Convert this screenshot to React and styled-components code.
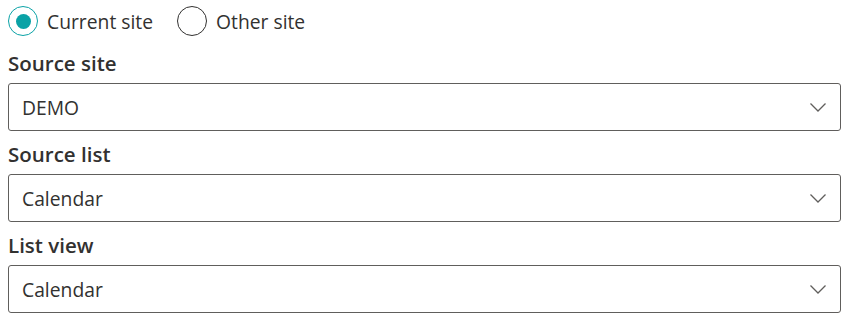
import React, { useState } from 'react';
import styled, { createGlobalStyle } from 'styled-components';

const GlobalStyle = createGlobalStyle`
    body{
        margin:0;
        background:#ffffff;
        font-family: "Segoe UI", "Open Sans", sans-serif;
        color:#323130;
    }
`

const Page = styled.div`
    padding: 0 5px 0 8px;
`

const RadioRow = styled.div`
    display:flex;
    align-items:center;
    gap:24px;
    height:40px;
    padding-top:2px;
    box-sizing:border-box;
`

const RadioOption = styled.label`
    display:flex;
    align-items:center;
    gap:9px;
    font-size:19.3px;
    color:#323130;
    cursor:pointer;
`

const Circle = styled.span`
    width:30px;
    height:30px;
    box-sizing:border-box;
    border-radius:50%;
    border:1.5px solid ${({ checked }) => checked ? '#0aa2a6' : '#323130'};
    display:flex;
    align-items:center;
    justify-content:center;
    &::after{
        content:'';
        width:15px;
        height:15px;
        border-radius:50%;
        background:#0aa2a6;
        display:${({ checked }) => checked ? 'block' : 'none'};
    }
`

const Label = styled.div`
    font-size:20.5px;
    font-weight:600;
    color:#323130;
    line-height:30px;
    padding:8px 0 5px;
`

const Dropdown = styled.div`
    height:48px;
    box-sizing:border-box;
    border:1.5px solid #605e5c;
    border-radius:3px;
    display:flex;
    align-items:center;
    justify-content:space-between;
    padding: 0 13px 0 13px;
    font-size:19.3px;
    color:#323130;
    cursor:pointer;
`

const Chevron = () => (
    <svg width="18" height="18" viewBox="0 0 18 18" fill="none">
        <path d="M1.5 5.5 L9 13 L16.5 5.5" stroke="#605e5c" strokeWidth="1.3" />
    </svg>
)

const fields = [
    { label: 'Source site', value: 'DEMO' },
    { label: 'Source list', value: 'Calendar' },
    { label: 'List view', value: 'Calendar' },
]

export default function App() {
    const [site, setSite] = useState('current')

    return (
        <Page>
            <GlobalStyle />
            <RadioRow>
                <RadioOption onClick={() => setSite('current')}>
                    <Circle checked={site === 'current'} />
                    Current site
                </RadioOption>
                <RadioOption onClick={() => setSite('other')}>
                    <Circle checked={site === 'other'} />
                    Other site
                </RadioOption>
            </RadioRow>
            {fields.map(f => (
                <div key={f.label}>
                    <Label>{f.label}</Label>
                    <Dropdown>
                        {f.value}
                        <Chevron />
                    </Dropdown>
                </div>
            ))}
        </Page>
    )
}
